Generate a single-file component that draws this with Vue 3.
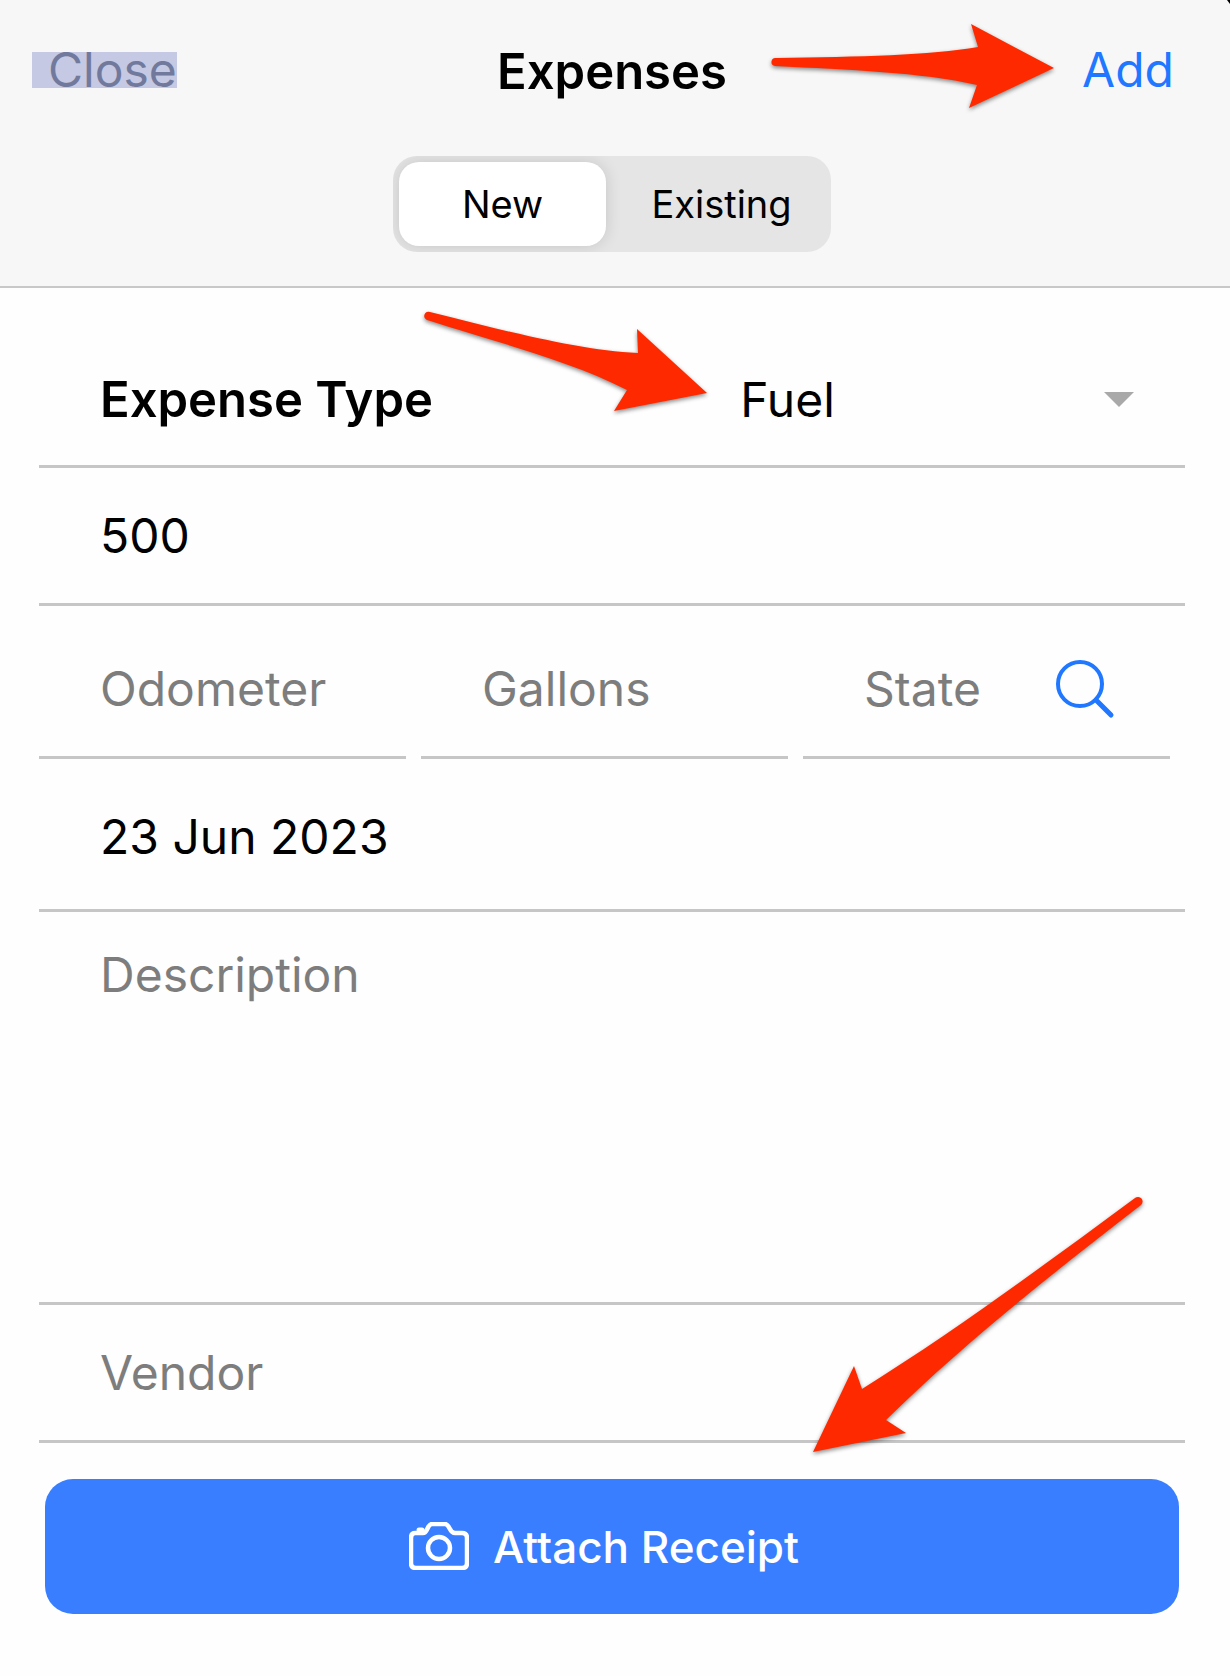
<template>
  <div class="expense-page">
    <header class="page-header">
      <nav class="nav-bar">
        <button type="button" class="nav-btn close-btn">Close</button>
        <h1 class="page-title">Expenses</h1>
        <button type="button" class="nav-btn add-btn">Add</button>
      </nav>
      <div class="segment">
        <button
          v-for="tab in tabs"
          :key="tab"
          type="button"
          class="segment-btn"
          :class="{ active: tab === activeTab }"
          :aria-pressed="tab === activeTab"
          @click="activeTab = tab"
        >{{ tab }}</button>
      </div>
    </header>

    <form class="expense-form" @submit.prevent>
      <div class="row type-row">
        <label for="expense-type" class="type-label">Expense Type</label>
        <div class="select-wrap">
          <select id="expense-type" v-model="form.type" class="field type-select">
            <option v-for="t in expenseTypes" :key="t">{{ t }}</option>
          </select>
          <svg class="caret" viewBox="0 0 30 15" aria-hidden="true">
            <path d="M0 0H30L15 15Z" fill="#a9a9a9" />
          </svg>
        </div>
      </div>

      <div class="row short-row">
        <input v-model="form.amount" class="field" type="text" aria-label="Amount" />
      </div>

      <div class="fuel-row">
        <div class="row fuel-cell">
          <input v-model="form.odometer" class="field" type="text" placeholder="Odometer" aria-label="Odometer" />
        </div>
        <div class="row fuel-cell">
          <input v-model="form.gallons" class="field" type="text" placeholder="Gallons" aria-label="Gallons" />
        </div>
        <div class="row fuel-cell">
          <input v-model="form.state" class="field" type="text" placeholder="State" aria-label="State" />
          <button type="button" class="search-btn" aria-label="Search state">
            <svg viewBox="0 0 60 60" fill="none" stroke="#1f78ff" stroke-width="4" stroke-linecap="round">
              <circle cx="25" cy="25" r="22" />
              <path d="M41 41L56 56" stroke-width="5" />
            </svg>
          </button>
        </div>
      </div>

      <div class="row date-row">
        <input v-model="form.date" class="field" type="text" aria-label="Date" />
      </div>

      <div class="row description-row">
        <textarea v-model="form.description" class="field" placeholder="Description" aria-label="Description"></textarea>
      </div>

      <div class="row short-row">
        <input v-model="form.vendor" class="field" type="text" placeholder="Vendor" aria-label="Vendor" />
      </div>

      <button type="button" class="attach-btn">
        <svg class="camera" viewBox="0 0 60 48" fill="none" stroke="#fff" stroke-width="4.5" stroke-linejoin="round" stroke-linecap="round" aria-hidden="true">
          <path d="M6 11H14C19 11 18 2 23 2H36C41 2 40 11 46 11H53Q58 11 58 16V41Q58 46 53 46H7Q2 46 2 41V16Q2 11 6 11Z" />
          <path d="M10 8H13" stroke-width="5" />
          <circle cx="30" cy="26" r="11" />
        </svg>
        <span>Attach Receipt</span>
      </button>
    </form>

    <!-- 标注箭头 -->
    <svg
      v-for="arrow in arrows"
      :key="arrow.name"
      class="arrow"
      :class="arrow.name"
      :viewBox="arrow.box"
      aria-hidden="true"
    >
      <path :d="arrow.path" />
    </svg>
  </div>
</template>

<script setup>
import { ref, reactive } from 'vue';

const tabs = ['New', 'Existing'];
const activeTab = ref('New');

const expenseTypes = ['Fuel', 'Toll', 'Parking', 'Repair'];

const form = reactive({
  type: 'Fuel',
  amount: '500',
  odometer: '',
  gallons: '',
  state: '',
  date: '23 Jun 2023',
  description: '',
  vendor: ''
});

// 三个红色箭头: Add、Fuel、Attach Receipt
const arrows = [
  {
    name: 'arrow-add',
    box: '0 0 284 86',
    path: 'M6 34C90 33 160 31 208 23L201 0L284 44L199 84L207 61C150 48 80 46 5 42A4 4 0 0 1 6 34Z'
  },
  {
    name: 'arrow-type',
    box: '0 0 284 102',
    path: 'M6 2C75 19 155 41 214 43L213 19L283 83L190 101L203 80C145 50 65 30 3 10A4 4 0 0 1 6 2Z'
  },
  {
    name: 'arrow-attach',
    box: '0 0 332 256',
    path: 'M322 2C230 70 140 136 49 193L41 170L0 256L93 237L73 224C150 148 240 77 328 9A4 4 0 0 0 322 2Z'
  }
];
</script>

<style>
body {
  margin: 0;
  background: #fefefe;
}
</style>

<style scoped>
.expense-page {
  position: relative;
  font-family: Inter, "Liberation Sans", sans-serif;
  font-size: 48px;
  line-height: 60px;
  color: #000;
  background: #fefefe;
  overflow: hidden;
}

/* 右上角露出的黑色圆角 */
.expense-page::after {
  content: "";
  position: absolute;
  top: 0;
  right: 0;
  border-top: 4px solid #000;
  border-left: 3px solid transparent;
}

button {
  font: inherit;
  border: none;
  padding: 0;
  background: none;
  cursor: pointer;
}

.page-header {
  background: #f7f7f7;
  border-bottom: 2px solid #c8c8c8;
  padding: 42px 38px 34px 32px;
}

.nav-bar {
  display: grid;
  grid-template-columns: 1fr auto 1fr;
  align-items: center;
  height: 60px;
  margin-bottom: 54px;
}

.nav-btn {
  font-size: 48px;
  margin-bottom: 4px;
}

.close-btn {
  justify-self: start;
  height: 36px;
  line-height: 36px;
  padding-left: 16px;
  color: #717a9c;
  background: #c5c9e3;
}

.page-title {
  margin: 0;
  font-size: 49px;
  font-weight: 600;
}

.add-btn {
  justify-self: end;
  height: 56px;
  line-height: 56px;
  padding-right: 18px;
  color: #1f78ff;
}

.segment {
  display: grid;
  grid-template-columns: 1fr 1fr;
  gap: 12px;
  box-sizing: border-box;
  width: 438px;
  max-width: 100%;
  height: 96px;
  margin: 0 auto;
  padding: 6px;
  border-radius: 24px;
  background: #e5e5e5;
  overflow: hidden;
}

.segment-btn {
  font-size: 38px;
  color: #000;
  border-radius: 20px;
}

.segment-btn.active {
  background: #fff;
  box-shadow: 0 0 16px rgba(0, 0, 0, 0.14);
}

.expense-form {
  padding: 0 45px 62px 39px;
}

.row {
  display: flex;
  align-items: center;
  box-sizing: border-box;
  border-bottom: 3px solid #c6c6c6;
  padding-left: 61px;
}

.field {
  flex: 1;
  min-width: 0;
  width: 100%;
  margin: 0;
  padding: 0;
  border: none;
  outline: none;
  background: transparent;
  color: #000;
  font: inherit;
  height: 60px;
}

.field::placeholder {
  color: #7d7d7d;
  opacity: 1;
}

.type-row {
  display: grid;
  grid-template-columns: 59fr 41fr;
  height: 180px;
  padding-top: 46px;
}

.type-label {
  font-size: 49px;
  font-weight: 600;
}

.select-wrap {
  position: relative;
  display: flex;
  align-items: center;
}

.type-select {
  appearance: none;
}

.caret {
  position: absolute;
  right: 51px;
  width: 30px;
  height: 15px;
  pointer-events: none;
}

.short-row {
  height: 138px;
}

.fuel-row {
  display: grid;
  grid-template-columns: repeat(3, 1fr);
  gap: 15px;
  padding-right: 15px;
}

.fuel-cell {
  height: 153px;
  padding-top: 16px;
}

.search-btn {
  flex: none;
  width: 60px;
  height: 60px;
  margin-right: 55px;
}

.search-btn svg {
  display: block;
}

.date-row {
  height: 153px;
  padding-top: 6px;
}

.description-row {
  height: 393px;
  padding-top: 33px;
}

.description-row .field {
  height: 100%;
  resize: none;
}

.attach-btn {
  display: flex;
  align-items: center;
  justify-content: center;
  gap: 24px;
  width: calc(100% - 12px);
  height: 135px;
  margin: 36px 6px 0;
  padding-right: 16px;
  border-radius: 28px;
  background: #387eff;
  color: #fff;
  font-size: 44px;
  font-weight: 500;
}

.camera {
  width: 60px;
  height: 48px;
  margin-bottom: 2px;
}

.arrow {
  position: absolute;
  overflow: visible;
  pointer-events: none;
  fill: #ff2900;
  filter: drop-shadow(0 2px 2px rgba(0, 0, 0, 0.45));
}

.arrow-add {
  top: 24px;
  right: 176px;
  width: 284px;
  height: 86px;
}

.arrow-type {
  top: 310px;
  right: 522px;
  width: 284px;
  height: 102px;
}

.arrow-attach {
  top: 1196px;
  right: 85px;
  width: 332px;
  height: 256px;
}
</style>
